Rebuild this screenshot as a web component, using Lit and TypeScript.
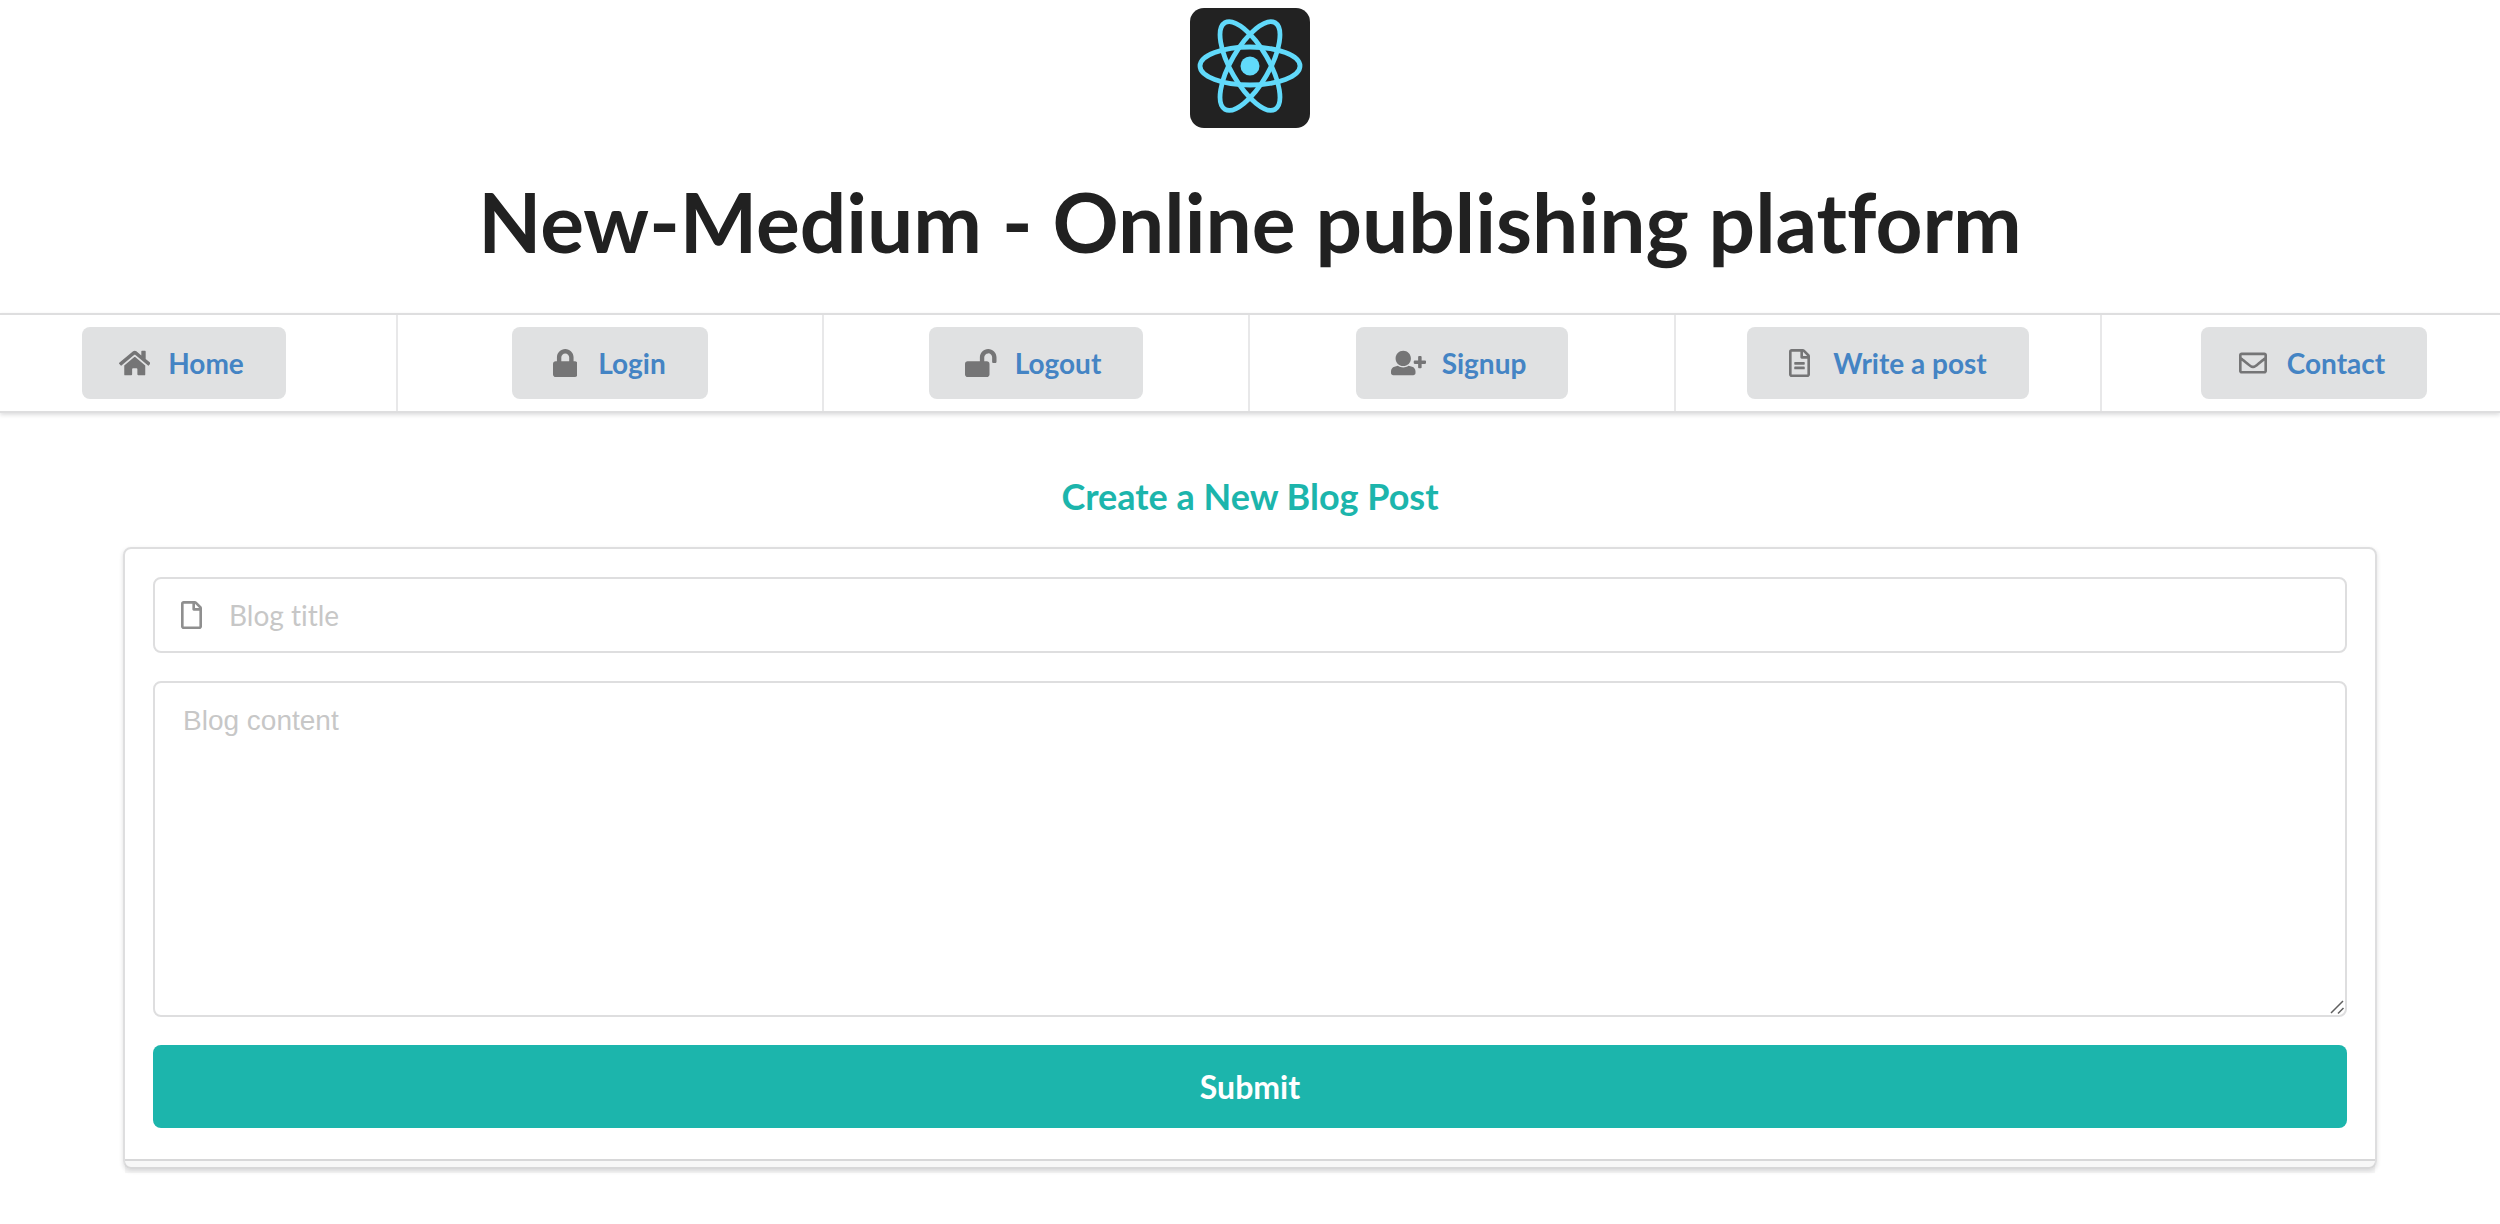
import { LitElement, html, css, svg } from "lit";
import { customElement } from "lit/decorators.js";

interface Glyph {
  width: number;
  path: string;
}

const glyphs: Record<string, Glyph> = {
  home: {
    width: 576,
    path: "M280.37 148.26L96 300.11V464a16 16 0 0 0 16 16l112.06-.29a16 16 0 0 0 15.92-16V368a16 16 0 0 1 16-16h64a16 16 0 0 1 16 16v95.64a16 16 0 0 0 16 16.05L464 480a16 16 0 0 0 16-16V300L295.67 148.26a12.19 12.19 0 0 0-15.3 0zM571.6 251.47L488 182.56V44.05a12 12 0 0 0-12-12h-56a12 12 0 0 0-12 12v72.61L318.47 43a48 48 0 0 0-61 0L4.34 251.47a12 12 0 0 0-1.6 16.9l25.5 31A12 12 0 0 0 45.15 301l235.22-193.74a12.19 12.19 0 0 1 15.3 0L530.9 301a12 12 0 0 0 16.9-1.6l25.5-31a12 12 0 0 0-1.7-16.93z",
  },
  lock: {
    width: 448,
    path: "M400 224h-24v-72C376 68.2 307.8 0 224 0S72 68.2 72 152v72H48c-26.5 0-48 21.5-48 48v192c0 26.5 21.5 48 48 48h352c26.5 0 48-21.5 48-48V272c0-26.5-21.5-48-48-48zm-104 0H152v-72c0-39.7 32.3-72 72-72s72 32.3 72 72v72z",
  },
  lockOpen: {
    width: 576,
    path: "M423.5 0C339.5.3 272 69.5 272 153.5V224H48c-26.5 0-48 21.5-48 48v192c0 26.5 21.5 48 48 48h352c26.5 0 48-21.5 48-48V272c0-26.5-21.5-48-48-48h-48v-71.1c0-39.6 31.7-72.5 71.3-72.9 40-.4 72.7 32.1 72.7 72v80c0 13.3 10.7 24 24 24h32c13.3 0 24-10.7 24-24v-80C576 68 507.5-.3 423.5 0z",
  },
  userPlus: {
    width: 640,
    path: "M640 224v32c0 8.8-7.2 16-16 16h-64v64c0 8.8-7.2 16-16 16h-32c-8.8 0-16-7.2-16-16v-64h-64c-8.8 0-16-7.2-16-16v-32c0-8.8 7.2-16 16-16h64v-64c0-8.8 7.2-16 16-16h32c8.8 0 16 7.2 16 16v64h64c8.8 0 16 7.2 16 16zM224 32c77.3 0 140 62.7 140 140s-62.7 140-140 140S84 249.3 84 172 146.7 32 224 32zm160.4 292.1l-62.4-15.6c-65.6 47.2-145 36.6-196 0l-62.4 15.6C26.2 333.4 0 367 0 405.5V438c0 23.2 18.8 42 42 42h364c23.2 0 42-18.8 42-42v-32.5c0-38.5-26.2-72.1-63.6-81.4z",
  },
  fileText: {
    width: 384,
    path: "M288 248v28c0 6.6-5.4 12-12 12H108c-6.6 0-12-5.4-12-12v-28c0-6.6 5.4-12 12-12h168c6.6 0 12 5.4 12 12zm-12 72H108c-6.6 0-12 5.4-12 12v28c0 6.6 5.4 12 12 12h168c6.6 0 12-5.4 12-12v-28c0-6.6-5.4-12-12-12zm108-188.1V464c0 26.5-21.5 48-48 48H48c-26.5 0-48-21.5-48-48V48C0 21.5 21.5 0 48 0h204.1C264.8 0 277 5.1 286 14.1L369.9 98c9 8.9 14.1 21.2 14.1 33.9zm-128-80V128h76.1L256 51.9zM336 464V176H232c-13.3 0-24-10.7-24-24V48H48v416h288z",
  },
  file: {
    width: 384,
    path: "M384 131.9V464c0 26.5-21.5 48-48 48H48c-26.5 0-48-21.5-48-48V48C0 21.5 21.5 0 48 0h204.1C264.8 0 277 5.1 286 14.1L369.9 98c9 8.9 14.1 21.2 14.1 33.9zm-128-80V128h76.1L256 51.9zM336 464V176H232c-13.3 0-24-10.7-24-24V48H48v416h288z",
  },
  envelope: {
    width: 512,
    path: "M464 64H48C21.49 64 0 85.49 0 112v288c0 26.51 21.49 48 48 48h416c26.51 0 48-21.49 48-48V112c0-26.51-21.49-48-48-48zm0 48v40.805c-22.422 18.259-58.168 46.651-134.587 106.49-16.841 13.247-50.201 45.072-73.413 44.701-23.208.375-56.579-31.459-73.413-44.701C106.18 199.465 70.425 171.067 48 152.805V112h416zM48 400V214.398c22.914 18.251 55.409 43.862 104.938 82.646 21.857 17.205 60.134 55.186 103.062 54.955 42.717.231 80.509-37.199 103.053-54.947 49.528-38.783 82.032-64.401 104.947-82.653V400H48z",
  },
};

const glyph = (name: string) => {
  const { width, path } = glyphs[name];
  return html`<svg class="glyph" viewBox="0 0 ${width} 512" aria-hidden="true">
    ${svg`<path d=${path}></path>`}
  </svg>`;
};

const links = [
  { icon: "home", label: "Home", href: "#home" },
  { icon: "lock", label: "Login", href: "#login" },
  { icon: "lockOpen", label: "Logout", href: "#logout" },
  { icon: "userPlus", label: "Signup", href: "#signup" },
  { icon: "fileText", label: "Write a post", href: "#write" },
  { icon: "envelope", label: "Contact", href: "#contact" },
];

@customElement("app-root")
export class AppRoot extends LitElement {
  static styles = css`
    :host {
      display: block;
      overflow-x: clip;
      background: #fff;
      color: #212121;
      font-family: Lato, "Liberation Sans", sans-serif;
      font-size: 28px;
      font-variant-ligatures: none;
      --line: #dededf;
      --teal: #1cb5ac;
    }
    * {
      box-sizing: border-box;
    }
    .masthead {
      display: flex;
      flex-direction: column;
      align-items: center;
      padding-top: 8px;
    }
    .logo {
      display: block;
      width: 120px;
      height: 120px;
    }
    .title {
      margin: 39px 0 38px;
      font-size: 82px;
      line-height: 108px;
      font-weight: 700;
      text-align: center;
    }
    .bar {
      border-top: 2px solid var(--line);
      border-bottom: 2px solid var(--line);
      box-shadow: 0 2px 4px rgba(34, 36, 38, 0.15);
    }
    .menu {
      display: grid;
      grid-template-columns: repeat(6, 1fr);
      margin: 0 -28px;
      padding: 0;
      list-style: none;
    }
    .cell {
      display: flex;
      justify-content: center;
      padding: 12px 0;
      border-right: 2px solid #e8e8e9;
    }
    .cell:last-child {
      border-right-color: transparent;
    }
    .link {
      display: flex;
      align-items: center;
      padding: 22px 42px 22px 36px;
      border-radius: 8px;
      background: #e0e1e2;
      color: #4484c4;
      line-height: 28px;
      font-weight: 700;
      text-decoration: none;
      white-space: nowrap;
    }
    .icon {
      display: flex;
      justify-content: center;
      width: 33px;
      margin-right: 17px;
      color: #757576;
    }
    .glyph {
      display: block;
      flex: none;
      height: 28px;
      fill: currentColor;
    }
    .compose {
      padding: 60px 123px 54px;
    }
    .heading {
      margin: 0 0 28px;
      color: var(--teal);
      font-size: 36px;
      line-height: 46px;
      font-weight: 700;
      text-align: center;
    }
    .segment {
      position: relative;
      display: flex;
      flex-direction: column;
      gap: 28px;
      padding: 28px 28px 39px;
      border: 2px solid var(--line);
      border-radius: 8px;
      box-shadow: 0 2px 4px rgba(34, 36, 38, 0.15);
    }
    .segment::after {
      content: "";
      position: absolute;
      left: 0;
      right: 0;
      bottom: -6px;
      height: 12px;
      border-top: 2px solid rgba(34, 36, 38, 0.15);
      background: rgba(0, 0, 0, 0.03);
      pointer-events: none;
    }
    .field {
      display: flex;
      align-items: center;
      gap: 27px;
      padding-left: 26px;
      border: 2px solid var(--line);
      border-radius: 8px;
      background: #fff;
    }
    .field:focus-within,
    .content:focus {
      border-color: #85b7d9;
    }
    .field-icon {
      color: #8f8f8f;
    }
    .input {
      flex: 1;
      min-width: 0;
      padding: 19px 28px 19px 0;
      border: 0;
      outline: 0;
      background: none;
      color: inherit;
      font: inherit;
      font-variant-ligatures: none;
      line-height: 34px;
    }
    .content {
      display: block;
      width: 100%;
      margin: 0;
      padding: 20px 28px 24px;
      border: 2px solid var(--line);
      border-radius: 8px;
      outline: 0;
      background: #fff;
      color: inherit;
      font: 28px/36px "Liberation Sans", Arial, sans-serif;
      resize: vertical;
    }
    .content::-webkit-resizer {
      background: url("data:image/svg+xml,%3Csvg xmlns='http://www.w3.org/2000/svg' viewBox='0 0 15 15'%3E%3Cpath d='M1 13L13 1M8 13.5L13.5 8' fill='none' stroke='%23606060' stroke-width='1.5'/%3E%3C/svg%3E")
        center / 100% no-repeat;
    }
    .input::placeholder,
    .content::placeholder {
      color: #c7c7c7;
      opacity: 1;
    }
    .submit {
      padding: 25px 42px;
      border: 0;
      border-radius: 8px;
      background: var(--teal);
      color: #fff;
      font: 700 32px/33px Lato, "Liberation Sans", sans-serif;
      cursor: pointer;
    }
  `;

  render() {
    return html`
      <header class="masthead">
        <svg class="logo" viewBox="0 0 120 120" role="img" aria-label="React">
          <rect width="120" height="120" rx="14" fill="#222"></rect>
          <g fill="none" stroke="#61dafb" stroke-width="4.8">
            <ellipse cx="60" cy="58" rx="50" ry="19"></ellipse>
            <ellipse cx="60" cy="58" rx="50" ry="19" transform="rotate(60 60 58)"></ellipse>
            <ellipse cx="60" cy="58" rx="50" ry="19" transform="rotate(120 60 58)"></ellipse>
          </g>
          <circle cx="60" cy="58" r="9.5" fill="#61dafb"></circle>
        </svg>
        <h1 class="title">New-Medium - Online publishing platform</h1>
      </header>
      <nav class="bar" aria-label="Main">
        <ul class="menu">
          ${links.map(
            (link) => html`<li class="cell">
              <a class="link" href=${link.href}
                ><span class="icon">${glyph(link.icon)}</span>${link.label}</a
              >
            </li>`
          )}
        </ul>
      </nav>
      <main class="compose">
        <h2 class="heading">Create a New Blog Post</h2>
        <form class="segment" @submit=${(e: Event) => e.preventDefault()}>
          <div class="field">
            <label class="field-icon" for="title">${glyph("file")}</label>
            <input class="input" id="title" type="text" placeholder="Blog title" aria-label="Blog title" />
          </div>
          <textarea class="content" rows="8" placeholder="Blog content" aria-label="Blog content"></textarea>
          <button class="submit" type="submit">Submit</button>
        </form>
      </main>
    `;
  }
}
